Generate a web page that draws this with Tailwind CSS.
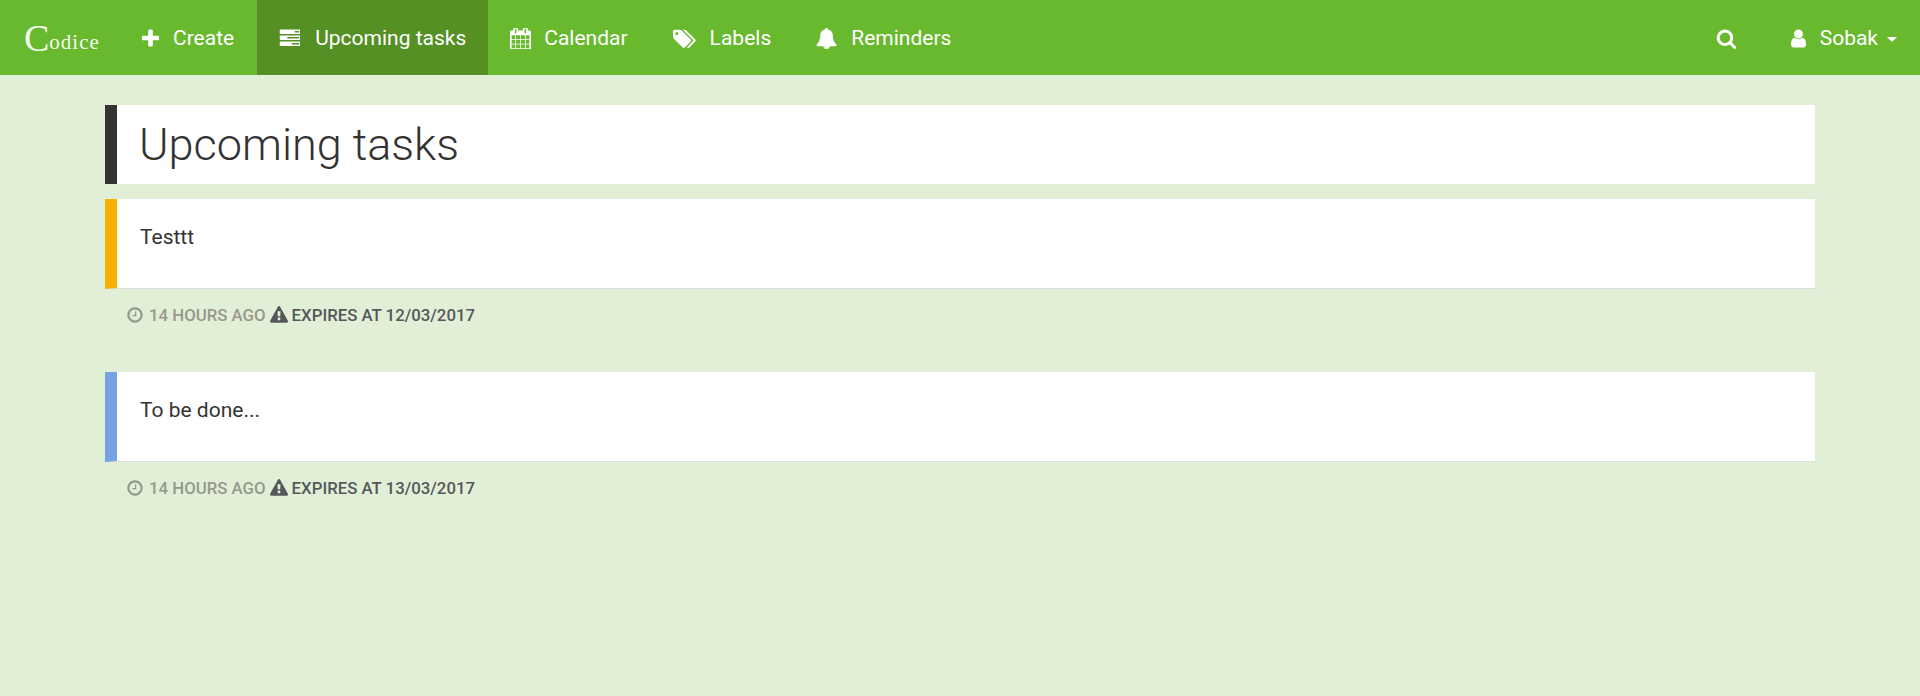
<!DOCTYPE html>
<html lang="en">
<head>
<meta charset="utf-8">
<title>Upcoming tasks</title>
<script src="https://cdn.jsdelivr.net/npm/@tailwindcss/browser@4"></script>
</head>
<body class="min-h-[696px] bg-[#e2efd7] font-['Roboto',sans-serif] text-[#333333]">
<nav class="flex h-[75px] items-stretch bg-[#68b92e] text-[21px] text-white">
  <a class="flex w-[119px] items-center pl-[24px] font-['Liberation_Serif',serif] leading-none text-[#f4f9ee]"><span class="text-[38px] font-normal">C</span><span class="mt-[9px] text-[21px] tracking-[1px]">odice</span></a>
  <a class="flex items-center pl-[23px] pr-[23px] pt-[2px]">
    <svg class="mr-[14px] h-[21.6px] w-[17px] fill-current" viewBox="192 0 1408 1792"><path d="M1600 736v192q0 40-28 68t-68 28h-416v416q0 40-28 68t-68 28h-192q-40 0-68-28t-28-68v-416h-416q-40 0-68-28t-28-68v-192q0-40 28-68t68-28h416v-416q0-40 28-68t68-28h192q40 0 68 28t28 68v416h416q40 0 68 28t28 68z"/></svg>
    Create</a>
  <a class="flex items-center bg-[#549024] pl-[22px] pr-[22px] pt-[2px]">
    <svg class="mr-[15px] h-[21px] w-[21px] fill-current" viewBox="0 0 1792 1792"><path d="M1024 1408h640v-128h-640v128zm-384-512h1024v-128h-1024v128zm640-512h384v-128h-384v128zm512 832v256q0 26-19 45t-45 19h-1664q-26 0-45-19t-19-45v-256q0-26 19-45t45-19h1664q26 0 45 19t19 45zm0-512v256q0 26-19 45t-45 19h-1664q-26 0-45-19t-19-45v-256q0-26 19-45t45-19h1664q26 0 45 19t19 45zm0-512v256q0 26-19 45t-45 19h-1664q-26 0-45-19t-19-45v-256q0-26 19-45t45-19h1664q26 0 45 19t19 45z" transform="translate(64 0)"/></svg>
    Upcoming tasks</a>
  <a class="flex items-center pl-[22px] pr-[23px] pt-[2px]">
    <svg class="mr-[13px] h-[21px] w-[21px] fill-current" viewBox="64 64 1664 1664"><path d="M192 1664h288v-288h-288v288zm352 0h320v-288h-320v288zm-352-352h288v-320h-288v320zm352 0h320v-320h-320v320zm-352-384h288v-288h-288v288zm736 736h320v-288h-320v288zm-384-736h320v-288h-320v288zm768 736h288v-288h-288v288zm-384-352h320v-320h-320v320zm-352-864v-288q0-13-9.500-22.500t-22.500-9.500h-64q-13 0-22.500 9.500t-9.500 22.500v288q0 13 9.500 22.500t22.500 9.500h64q13 0 22.500-9.500t9.500-22.500zm736 864h288v-320h-288v320zm-384-384h320v-288h-320v288zm384 0h288v-288h-288v288zm32-480v-288q0-13-9.500-22.500t-22.500-9.500h-64q-13 0-22.500 9.500t-9.500 22.500v288q0 13 9.500 22.500t22.500 9.500h64q13 0 22.500-9.500t9.500-22.500zm384-64v1280q0 52-38 90t-90 38h-1408q-52 0-90-38t-38-90v-1280q0-52 38-90t90-38h128v-96q0-66 47-113t113-47h64q66 0 113 47t47 113v96h384v-96q0-66 47-113t113-47h64q66 0 113 47t47 113v96h128q52 0 90 38t38 90z"/></svg>
    Calendar</a>
  <a class="flex items-center pl-[22px] pr-[23px] pt-[2px]">
    <svg class="mr-[14px] h-[22px] w-[23px] fill-current" viewBox="0 0 1920 1792"><path d="M448 448q0-53-37.500-90.500t-90.500-37.500-90.500 37.500-37.500 90.500 37.500 90.500 90.500 37.500 90.500-37.500 37.500-90.500zm1067 576q0 53-37 90l-491 492q-39 37-91 37-53 0-90-37l-715-716q-38-37-64.500-101t-26.500-117v-416q0-52 38-90t90-38h416q53 0 117 26.500t102 64.500l715 714q37 39 37 91zm384 0q0 53-37 90l-491 492q-39 37-91 37-36 0-59-14t-53-45l470-470q37-37 37-90 0-52-37-91l-715-714q-38-38-102-64.500t-117-26.500h224q53 0 117 26.500t102 64.500l715 714q37 39 37 91z"/></svg>
    Labels</a>
  <a class="flex items-center pl-[22px] pr-[23px] pt-[2px]">
    <svg class="mr-[14px] h-[21px] w-[21px] fill-current" viewBox="64 32 1664 1728"><path d="M912 1696q0-16-16-16-59 0-101.500-42.500t-42.500-101.500q0-16-16-16t-16 16q0 73 51.500 124.500t124.500 51.500q16 0 16-16zm816-288q0 52-38 90t-90 38h-448q0 106-75 181t-181 75-181-75-75-181h-448q-52 0-90-38t-38-90q50-42 91-88t85-119.500 74.500-158.500 50-206 19.500-260q0-152 117-282.500t307-158.500q-8-19-8-39 0-40 28-68t68-28 68 28 28 68q0 20-8 39 190 28 307 158.500t117 282.500q0 139 19.500 260t50 206 74.500 158.500 85 119.500 91 88z"/></svg>
    Reminders</a>
  <div class="ml-auto flex items-stretch">
    <a class="flex items-center pr-[54px] pt-[2px]">
      <svg class="h-[21px] w-[21px] fill-current" viewBox="0 0 1792 1792"><path d="M1216 832q0-185-131.500-316.500t-316.500-131.500-316.500 131.500-131.500 316.500 131.500 316.500 316.500 131.500 316.500-131.500 131.500-316.500zm512 832q0 52-38 90t-90 38q-54 0-90-38l-343-342q-179 124-399 124-143 0-273.500-55.500t-225-150-150-225-55.500-273.500 55.500-273.500 150-225 225-150 273.500-55.500 273.500 55.500 225 150 150 225 55.500 273.500q0 220-124 399l343 343q37 37 37 90z"/></svg>
    </a>
    <a class="flex items-center pr-[23px] pt-[2px]">
      <svg class="mr-[14px] h-[21px] w-[15px] fill-current" viewBox="256 0 1280 1792"><path d="M1536 1399q0 109-62.500 187t-150.500 78h-854q-88 0-150.500-78t-62.500-187q0-85 8.500-160.500t31.500-152 58.500-131 94-89 134.500-34.500q131 128 313 128t313-128q76 0 134.500 34.500t94 89 58.500 131 31.500 152 8.500 160.500zm-256-887q0 159-112.500 271.500t-271.500 112.500-271.500-112.500-112.500-271.500 112.500-271.500 271.500-112.500 271.500 112.500 112.500 271.500z"/></svg>
      Sobak
      <span class="ml-[9px] mt-[2px] h-0 w-0 border-x-[5.5px] border-t-[5.5px] border-x-transparent border-t-white"></span>
    </a>
  </div>
</nav>
<main class="mx-[105px] pt-[30px]">
  <h1 class="flex h-[79px] items-center border-l-[12px] border-[#333333] bg-white pl-[22px] text-[45px] font-light leading-none">Upcoming tasks</h1>
  <section class="mt-[15px] mb-[47px]">
    <div class="h-[90px] border-b border-b-[#dddddd] border-l-[12px] border-l-[#f9b000] bg-white pl-[23px] pt-[26px] text-[21px] leading-[25px]">Testtt</div>
    <div class="flex items-center pl-[21px] pt-[16px] text-[16.8px] font-medium uppercase leading-[20px]">
      <span class="flex items-center text-[#95998a]"><svg class="mr-[5px] h-[18px] w-[18px] fill-current" viewBox="0 0 1792 1792"><path d="M1024 544v448q0 14-9 23t-23 9h-320q-14 0-23-9t-9-23v-64q0-14 9-23t23-9h224v-352q0-14 9-23t23-9h64q14 0 23 9t9 23zm416 352q0-148-73-273t-198-198-273-73-273 73-198 198-73 273 73 273 198 198 273 73 273-73 198-198 73-273zm224 0q0 209-103 385.500t-279.500 279.500-385.500 103-385.500-103-279.500-279.500-103-385.500 103-385.500 279.500-279.500 385.500-103 385.500 103 279.500 279.500 103 385.500z"/></svg>14 hours ago</span>
      <span class="ml-[4px] flex items-center text-[#55585a]"><svg class="mr-[4px] h-[18px] w-[18px] fill-current" viewBox="0 0 1792 1792"><path d="M1024 1375v-190q0-14-9.500-23.500t-22.500-9.500h-192q-13 0-22.500 9.500t-9.500 23.500v190q0 14 9.500 23.500t22.500 9.500h192q13 0 22.500-9.500t9.500-23.500zm-2-374l18-459q0-12-10-19-13-11-24-11h-220q-11 0-24 11-10 7-10 21l17 457q0 10 10 16.500t24 6.500h185q14 0 23.500-6.500t10.500-16.500zm-14-934l768 1408q35 63-2 126-17 29-46.500 46t-63.500 17h-1536q-34 0-63.500-17t-46.500-46q-37-63-2-126l768-1408q17-31 47-49t65-18 65 18 47 49z"/></svg>Expires at 12/03/2017</span>
    </div>
  </section>
  <section>
    <div class="h-[90px] border-b border-b-[#dddddd] border-l-[12px] border-l-[#78a3e2] bg-white pl-[23px] pt-[26px] text-[21px] leading-[25px]">To be done...</div>
    <div class="flex items-center pl-[21px] pt-[16px] text-[16.8px] font-medium uppercase leading-[20px]">
      <span class="flex items-center text-[#95998a]"><svg class="mr-[5px] h-[18px] w-[18px] fill-current" viewBox="0 0 1792 1792"><path d="M1024 544v448q0 14-9 23t-23 9h-320q-14 0-23-9t-9-23v-64q0-14 9-23t23-9h224v-352q0-14 9-23t23-9h64q14 0 23 9t9 23zm416 352q0-148-73-273t-198-198-273-73-273 73-198 198-73 273 73 273 198 198 273 73 273-73 198-198 73-273zm224 0q0 209-103 385.500t-279.500 279.500-385.500 103-385.500-103-279.500-279.500-103-385.500 103-385.500 279.500-279.500 385.500-103 385.500 103 279.500 279.500 103 385.500z"/></svg>14 hours ago</span>
      <span class="ml-[4px] flex items-center text-[#55585a]"><svg class="mr-[4px] h-[18px] w-[18px] fill-current" viewBox="0 0 1792 1792"><path d="M1024 1375v-190q0-14-9.500-23.500t-22.500-9.500h-192q-13 0-22.500 9.500t-9.500 23.500v190q0 14 9.500 23.500t22.500 9.500h192q13 0 22.500-9.500t9.500-23.500zm-2-374l18-459q0-12-10-19-13-11-24-11h-220q-11 0-24 11-10 7-10 21l17 457q0 10 10 16.500t24 6.500h185q14 0 23.500-6.500t10.500-16.500zm-14-934l768 1408q35 63-2 126-17 29-46.500 46t-63.500 17h-1536q-34 0-63.500-17t-46.500-46q-37-63-2-126l768-1408q17-31 47-49t65-18 65 18 47 49z"/></svg>Expires at 13/03/2017</span>
    </div>
  </section>
</main>
</body>
</html>
